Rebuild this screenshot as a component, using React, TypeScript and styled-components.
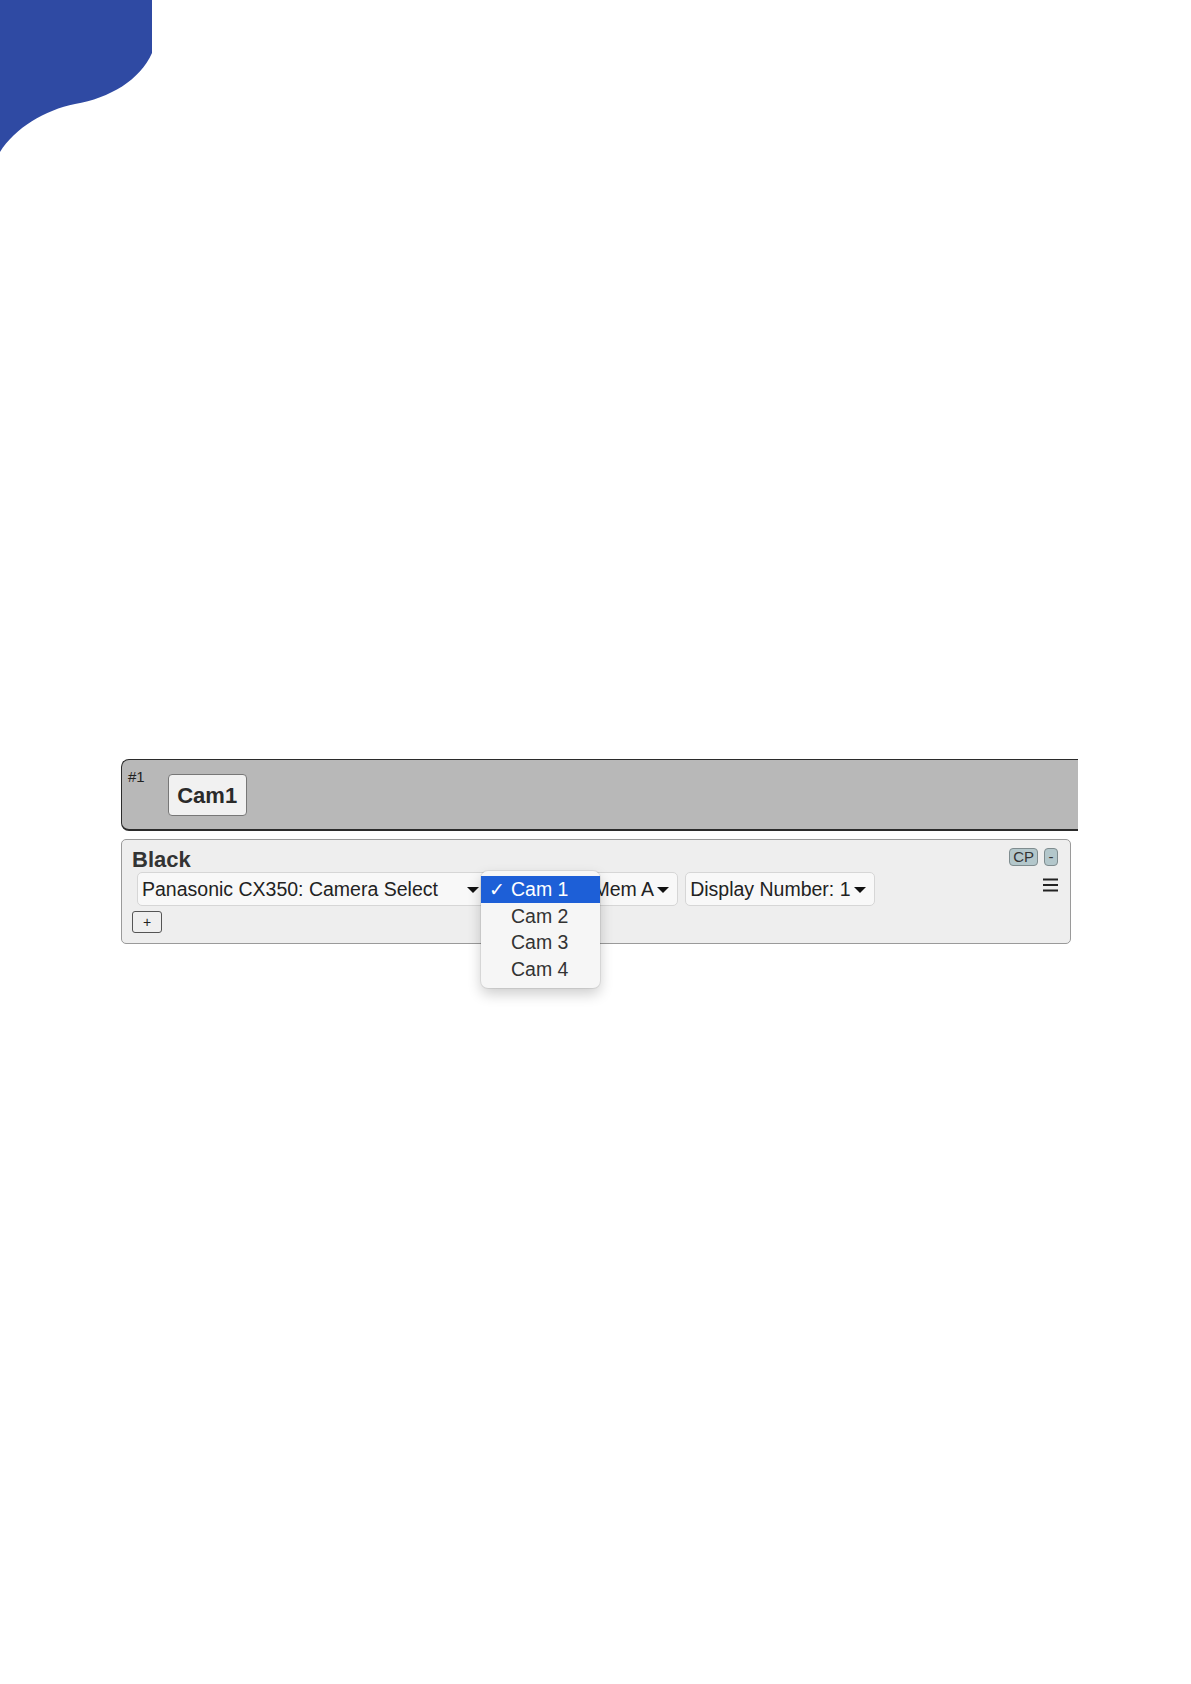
import React from 'react';
import styled, { createGlobalStyle } from 'styled-components';

const GlobalStyle = createGlobalStyle`
    body {
        margin: 0;
        background: #fff;
        font-family: "Liberation Sans", Arial, sans-serif;
    }
`;

const Page = styled.div`
    width: 1191px;
    min-height: 1684px;
    background: #fff;
`;

const Corner = styled.svg`
    display: block;
    width: 152px;
    height: 152px;
`;

const Stage = styled.div`
    padding: 607px 0 0 121px;
`;

const Header = styled.div`
    box-sizing: border-box;
    width: 957px;
    height: 72px;
    display: flex;
    align-items: flex-start;
    padding-left: 6px;
    background: #b8b8b8;
    border: 1px solid #2b2b2b;
    border-right: none;
    border-bottom-width: 2px;
    border-radius: 8px 0 0 8px;
`;

const Index = styled.div`
    margin-top: 8px;
    font-size: 15px;
    color: #222;
`;

const CamButton = styled.div`
    box-sizing: border-box;
    width: 79px;
    height: 42px;
    margin: 14px 0 0 23px;
    display: flex;
    align-items: center;
    justify-content: center;
    padding-top: 2px;
    background: #f1f1f1;
    border: 1px solid #777;
    border-radius: 4px;
    font-size: 22px;
    font-weight: bold;
    color: #2a2a2a;
`;

const Panel = styled.div`
    box-sizing: border-box;
    width: 950px;
    margin-top: 8px;
    padding: 8px 12px 10px 10px;
    display: grid;
    grid-template-columns: 1fr auto;
    background: #eeeeee;
    border: 1px solid #9a9a9a;
    border-radius: 5px;
`;

const Title = styled.div`
    font-size: 22px;
    line-height: 24px;
    font-weight: bold;
    color: #333;
`;

const Badges = styled.div`
    display: flex;
    justify-content: flex-end;
    align-items: flex-start;
    gap: 6px;
`;

const Badge = styled.div`
    box-sizing: border-box;
    height: 18px;
    min-width: 14px;
    padding: 0 3px;
    font-size: 15px;
    line-height: 16px;
    text-align: center;
    color: #333;
    background: #b3c7cb;
    border: 1px solid #7f8c8f;
    border-radius: 4px;
`;

const SelectRow = styled.div`
    display: flex;
    gap: 7px;
    padding-left: 5px;
`;

const SelectBox = styled.div<{ $width?: number }>`
    position: relative;
    box-sizing: border-box;
    height: 34px;
    width: ${p => (p.$width ? `${p.$width}px` : 'auto')};
    display: flex;
    align-items: center;
    justify-content: ${p => (p.$width ? 'space-between' : 'flex-start')};
    gap: 3px;
    padding: 0 8px 0 4px;
    background: #f8f8f8;
    border: 1px solid #d6d6d6;
    border-radius: 5px;
    font-size: 19.5px;
    color: #222;
    white-space: nowrap;
`;

const Covered = styled.span`
    visibility: hidden;
`;

const Caret = styled.span`
    flex-shrink: 0;
    width: 0;
    height: 0;
    margin-top: 2px;
    border-left: 6px solid transparent;
    border-right: 6px solid transparent;
    border-top: 6px solid #111;
`;

const Popup = styled.div`
    position: absolute;
    left: -15px;
    top: -2px;
    z-index: 2;
    box-sizing: border-box;
    width: 119px;
    padding: 5px 0;
    background: #f6f6f6;
    border-radius: 7px;
    box-shadow: 0 6px 14px rgba(0, 0, 0, 0.2), 0 0 0 1px rgba(0, 0, 0, 0.07);
`;

const Option = styled.div<{ $selected?: boolean }>`
    display: flex;
    align-items: center;
    height: 26.75px;
    padding-left: 8px;
    font-size: 19.5px;
    color: ${p => (p.$selected ? '#fff' : '#333')};
    background: ${p => (p.$selected ? '#1d5fd7' : 'transparent')};
`;

const Check = styled.span`
    width: 22px;
    font-family: "DejaVu Sans", sans-serif;
    font-size: 19px;
`;

const Menu = styled.svg`
    display: block;
    margin: 6px 0 0 auto;
`;

const PlusRow = styled.div`
    grid-column: 1 / -1;
    margin-top: 5px;
`;

const PlusButton = styled.div`
    box-sizing: border-box;
    width: 30px;
    height: 22px;
    display: flex;
    align-items: center;
    justify-content: center;
    background: #efefef;
    border: 1px solid #555;
    border-radius: 3px;
    font-size: 14px;
    color: #222;
`;

const cams = ['Cam 1', 'Cam 2', 'Cam 3', 'Cam 4'];

const App = () => {
    return (
        <Page>
            <GlobalStyle />
            <Corner viewBox="0 0 152 152">
                <path
                    d="M0 0 H152 V53 C140 80, 110 98, 75 104 C45 110, 15 128, 0 152 Z"
                    fill="#2f4aa3"
                />
            </Corner>
            <Stage>
                <Header>
                    <Index>#1</Index>
                    <CamButton>Cam1</CamButton>
                </Header>
                <Panel>
                    <Title>Black</Title>
                    <Badges>
                        <Badge>CP</Badge>
                        <Badge>-</Badge>
                    </Badges>
                    <SelectRow>
                        <SelectBox $width={351}>
                            Panasonic CX350: Camera Select
                            <Caret />
                        </SelectBox>
                        <SelectBox>
                            <Covered>Cam 1</Covered>
                            <Caret />
                            <Popup>
                                {cams.map((c, i) => (
                                    <Option key={c} $selected={i === 0}>
                                        <Check>{i === 0 ? '✓' : ''}</Check>
                                        {c}
                                    </Option>
                                ))}
                            </Popup>
                        </SelectBox>
                        <SelectBox>
                            Mem A
                            <Caret />
                        </SelectBox>
                        <SelectBox>
                            Display Number: 1
                            <Caret />
                        </SelectBox>
                    </SelectRow>
                    <Menu width="15" height="14" viewBox="0 0 15 14">
                        <rect x="0" y="0.5" width="15" height="2" fill="#222" />
                        <rect x="0" y="6" width="15" height="2" fill="#222" />
                        <rect x="0" y="11.5" width="15" height="2" fill="#222" />
                    </Menu>
                    <PlusRow>
                        <PlusButton>+</PlusButton>
                    </PlusRow>
                </Panel>
            </Stage>
        </Page>
    );
};

export default App;
